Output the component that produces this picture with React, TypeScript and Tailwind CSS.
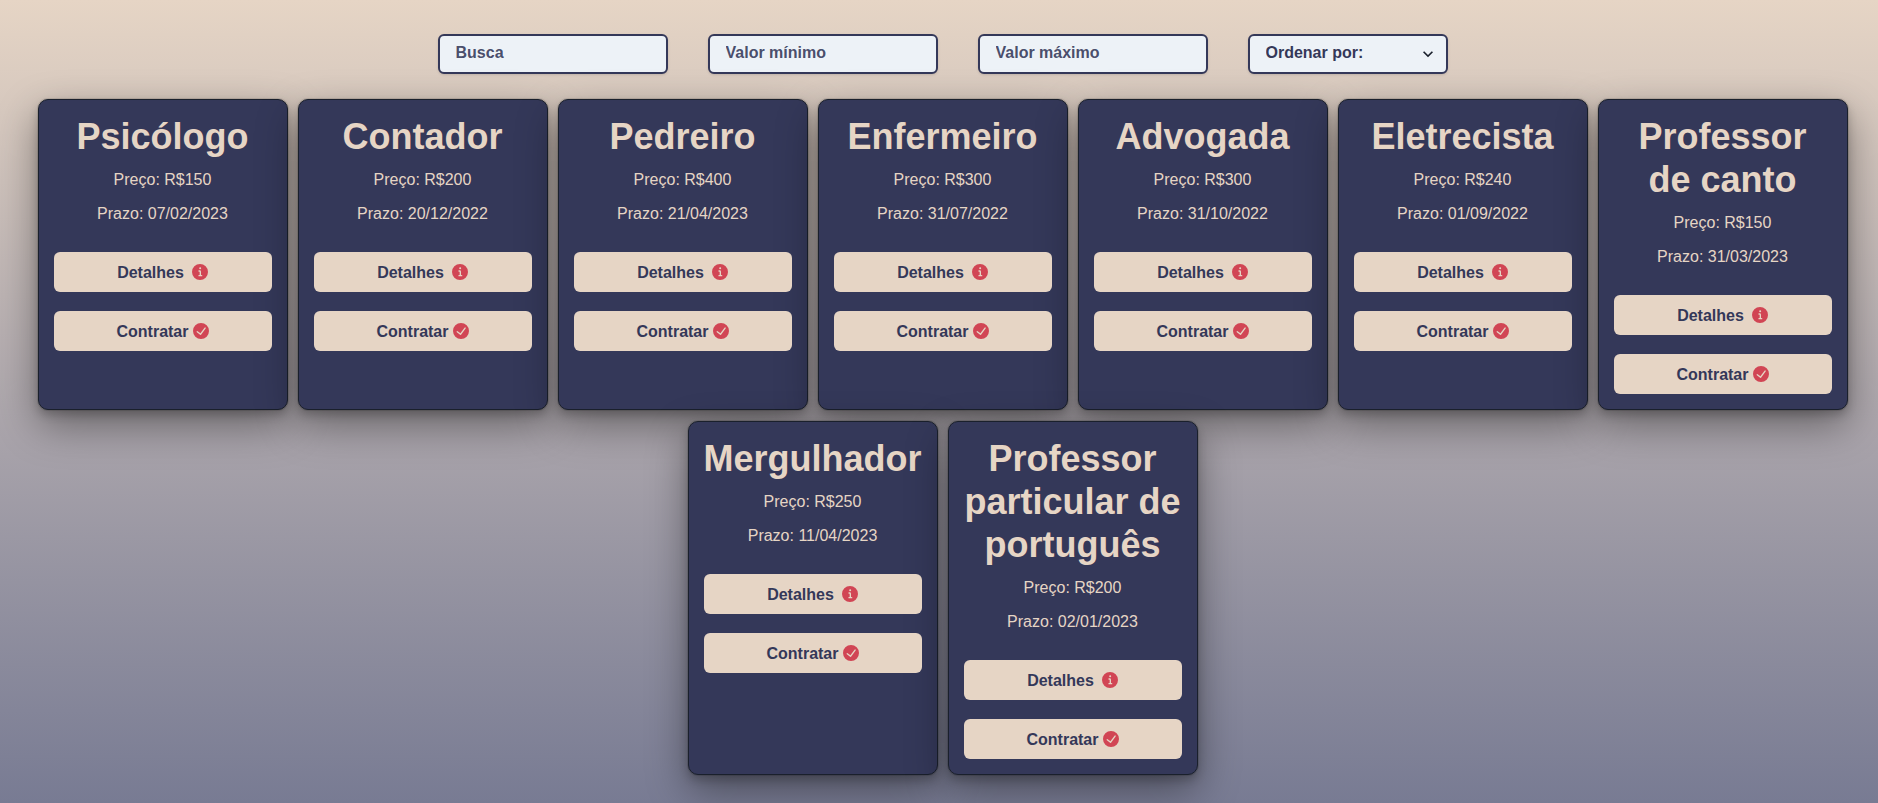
import React from "react";

type Service = { title: string; price: number; deadline: string };

const services: Service[] = [
  { title: "Psicólogo", price: 150, deadline: "07/02/2023" },
  { title: "Contador", price: 200, deadline: "20/12/2022" },
  { title: "Pedreiro", price: 400, deadline: "21/04/2023" },
  { title: "Enfermeiro", price: 300, deadline: "31/07/2022" },
  { title: "Advogada", price: 300, deadline: "31/10/2022" },
  { title: "Eletrecista", price: 240, deadline: "01/09/2022" },
  { title: "Professor de canto", price: 150, deadline: "31/03/2023" },
  { title: "Mergulhador", price: 250, deadline: "11/04/2023" },
  { title: "Professor particular de português", price: 200, deadline: "02/01/2023" },
];

const fieldClass =
  "h-10 rounded-md border-2 border-[#343859] bg-[#edf2f7] px-4 pb-0.5 text-base font-bold text-[#343859] shadow-sm outline-none placeholder:text-[#343859]/90";

const buttonClass =
  "relative flex h-10 items-center justify-center rounded-md bg-[#e6d5c5] leading-[19px]";

function InfoIcon() {
  return (
    <svg viewBox="0 0 24 24" className="size-4 fill-[#d14554]" aria-hidden="true">
      <path d="M12,0A12,12,0,1,0,24,12,12.013,12.013,0,0,0,12,0Zm.25,5a1.5,1.5,0,1,1-1.5,1.5A1.5,1.5,0,0,1,12.25,5ZM14.5,18.5h-4a1,1,0,0,1,0-2h.75a.25.25,0,0,0,.25-.25v-4.5a.25.25,0,0,0-.25-.25H10.5a1,1,0,0,1,0-2h1a2,2,0,0,1,2,2v4.75a.25.25,0,0,0,.25.25h.75a1,1,0,1,1,0,2Z" />
    </svg>
  );
}

function CheckIcon() {
  return (
    <svg viewBox="0 0 24 24" className="size-4 fill-[#d14554]" aria-hidden="true">
      <path d="M12,0A12,12,0,1,0,24,12,12.014,12.014,0,0,0,12,0Zm6.927,8.2-6.845,9.289a1.011,1.011,0,0,1-1.43.188L5.764,13.769a1,1,0,1,1,1.25-1.562l4.076,3.261,6.227-8.451A1,1,0,1,1,18.927,8.2Z" />
    </svg>
  );
}

function ServiceCard({ title, price, deadline }: Service) {
  return (
    <li className="flex w-[250px] flex-col rounded-[10px] border border-[#1a202c] bg-[#343859] p-[15px] text-center text-[#e6d5c5] shadow-[0_0_0_1px_rgba(0,0,0,0.1),0_5px_10px_rgba(0,0,0,0.2),0_15px_40px_rgba(0,0,0,0.4)]">
      <h2 className="text-4xl leading-[43px] font-bold">{title}</h2>
      <p className="mt-[10px] text-base">Preço: R${price}</p>
      <p className="mt-[10px] text-base">Prazo: {deadline}</p>
      <div className="mt-[26px] flex flex-col gap-[19px] font-bold text-[#343859]">
        <button type="button" className={`gap-2 ${buttonClass}`}>
          Detalhes
          <InfoIcon />
        </button>
        <button type="button" className={`gap-1 ${buttonClass}`}>
          Contratar
          <CheckIcon />
        </button>
      </div>
    </li>
  );
}

export default function App() {
  return (
    <main className="min-h-screen bg-linear-to-b from-[#e6d5c5] to-[#787b93] pt-[34px] pb-7 pl-[7px] font-['Liberation_Sans',Arial,sans-serif]">
      <form className="flex flex-wrap justify-center gap-10">
        <input aria-label="Busca" placeholder="Busca" className={`w-[230px] ${fieldClass}`} />
        <input aria-label="Valor mínimo" placeholder="Valor mínimo" className={`w-[230px] ${fieldClass}`} />
        <input aria-label="Valor máximo" placeholder="Valor máximo" className={`w-[230px] ${fieldClass}`} />
        <div className="relative w-[200px]">
          <select aria-label="Ordenar por" className={`w-full appearance-none ${fieldClass}`}>
            <option>Ordenar por:</option>
            <option>Título</option>
            <option>Preço</option>
            <option>Prazo</option>
          </select>
          <svg viewBox="0 0 24 24" className="pointer-events-none absolute top-[10px] right-[10px] size-5 fill-[#1a202c]" aria-hidden="true">
            <path d="M16.59 8.59L12 13.17 7.41 8.59 6 10l6 6 6-6z" />
          </svg>
        </div>
      </form>
      <ul className="mt-[25px] flex flex-wrap justify-center gap-x-[10px] gap-y-[11px]">
        {services.map((service) => (
          <ServiceCard key={service.title} {...service} />
        ))}
      </ul>
    </main>
  );
}
